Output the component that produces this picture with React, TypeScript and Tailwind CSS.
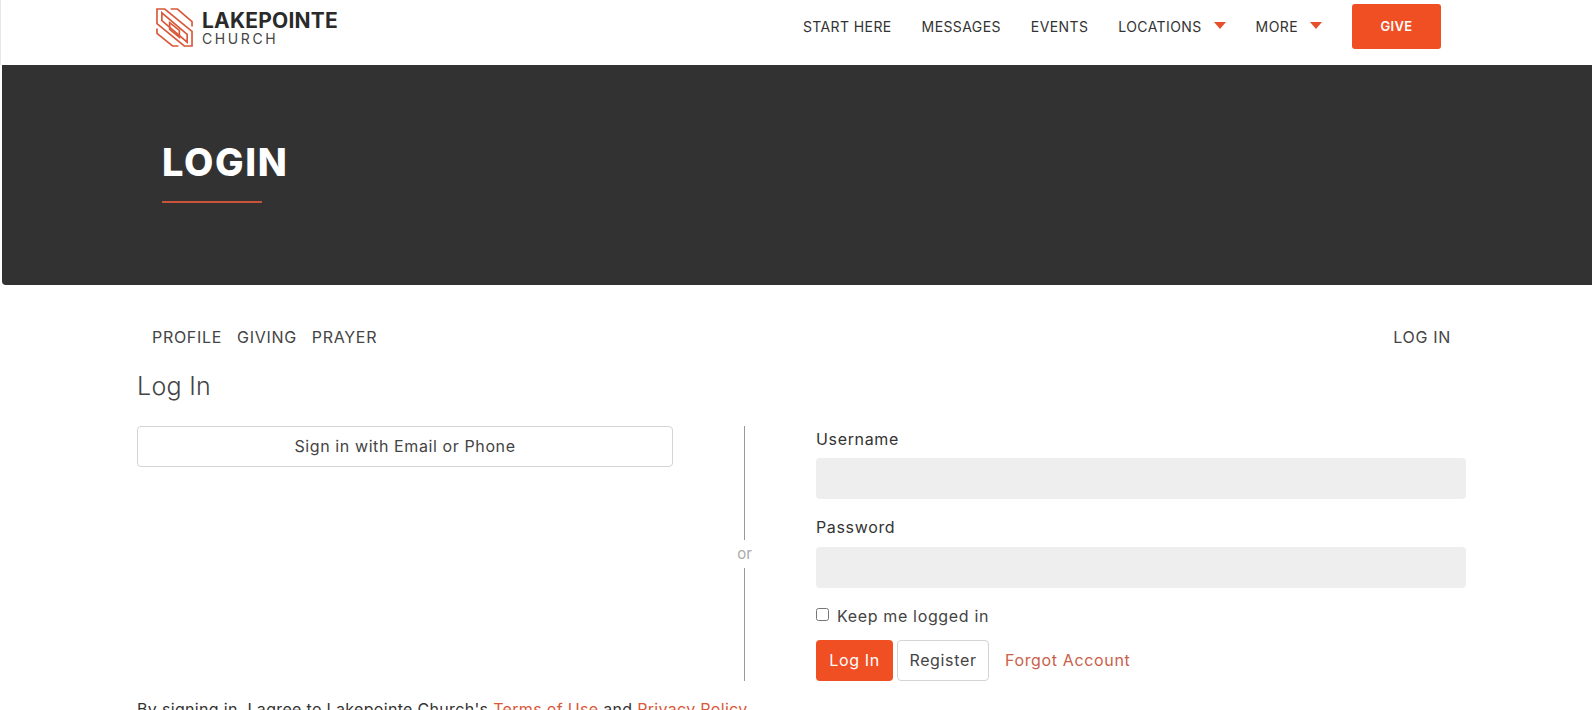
import React from 'react';

const font = "font-['Inter','Noto_Sans',sans-serif]";

const Logo = () => (
  <svg width="37" height="39" viewBox="0 0 38 40" fill="none" stroke="#d9583a" strokeWidth="1.7">
    <path d="M1 1H9L37 24V39H29L1 16Z" />
    <path d="M15 1H22L37 14V19" />
    <path d="M1 21V26L17 39H23" />
    <path d="M6 5V13L32 35V27Z" />
    <path d="M14 15L24 23V30L14 22Z" />
  </svg>
);

const Caret = () => <span className="mb-[3px] ml-[12px] inline-block border-x-[6px] border-t-[7px] border-x-transparent border-t-[#e8502c]" />;

const navItems = [
  { label: 'START HERE' },
  { label: 'MESSAGES' },
  { label: 'EVENTS' },
  { label: 'LOCATIONS', caret: true },
  { label: 'MORE', caret: true },
];

export default function App() {
  return (
    <div className={`${font} h-[710px] overflow-hidden bg-white text-[#333]`}>
      {/* Header */}
      <header className="flex h-[65px] items-center justify-between border-l border-gray-200 pl-[155px] pr-[151px]">
        <div className="mb-[10px] flex items-center gap-[9px]">
          <Logo />
          <div className="leading-none">
            <div className="text-[21px] font-bold tracking-[0.2px] text-[#2a2a2a]">LAKEPOINTE</div>
            <div className="mt-[1px] text-[14px] tracking-[2.6px] text-[#444]">CHURCH</div>
          </div>
        </div>
        <nav className="mb-[12px] flex items-center gap-[30px] text-[14px] text-[#333]">
          {navItems.map((item) => (
            <a key={item.label} className="flex items-center tracking-[0.4px]">
              {item.label}
              {item.caret && <Caret />}
            </a>
          ))}
          <button className="h-[45px] w-[89px] rounded-[3px] bg-[#f04e23] text-[13px] font-semibold tracking-[0.3px] text-white">GIVE</button>
        </nav>
      </header>

      {/* Page title */}
      <section className="ml-[2px] h-[220px] rounded-bl-[4px] bg-[#323232] pl-[160px] pt-[75px]">
        <h1 className="text-[38px] font-extrabold leading-[44px] tracking-[1.6px] text-white">LOGIN</h1>
        <div className="mt-[17px] h-[2px] w-[100px] bg-[#c9543a]" />
      </section>

      <main className="pl-[137px] pr-[126px]">
        {/* Sub nav */}
        <div className="flex items-center justify-between pl-[15px] pr-[15px] pt-[42px] text-[16px] leading-[20px] tracking-[0.7px] text-[#444]">
          <div className="flex gap-[15px]">
            <a>PROFILE</a>
            <a>GIVING</a>
            <a>PRAYER</a>
          </div>
          <a>LOG IN</a>
        </div>

        <h2 className="mt-[23px] text-[25px] font-light leading-[32px] tracking-[0.3px] text-[#444]">Log In</h2>

        <div className="mt-[24px] flex">
          {/* External sign in */}
          <div className="w-[536px]">
            <button className="h-[41px] w-full rounded-[4px] border border-[#d4d4d4] bg-white pb-[1px] text-[16px] tracking-[0.6px] text-[#444]">
              Sign in with Email or Phone
            </button>
          </div>

          {/* Divider */}
          <div className="mx-[71px] flex h-[255px] w-[1px] flex-col items-center">
            <div className="w-[1px] flex-1 bg-[#999]" />
            <span className="py-[5px] text-[15px] leading-[18px] text-[#aaa]">or</span>
            <div className="w-[1px] flex-1 bg-[#999]" />
          </div>

          {/* Login form */}
          <form className="w-[650px] tracking-[0.65px]">
            <label className="mt-[3px] block text-[16px] leading-[20px] text-[#333]">Username</label>
            <input className="mt-[9px] block h-[41px] w-full rounded-[4px] bg-[#eeeeee]" />
            <label className="mt-[18px] block text-[16px] leading-[20px] text-[#333]">Password</label>
            <input className="mt-[10px] block h-[41px] w-full rounded-[4px] bg-[#eeeeee]" />
            <label className="mt-[18px] flex items-center text-[16px] leading-[20px] text-[#444]">
              <input type="checkbox" className="mb-[3px] mr-[8px] h-[13px] w-[13px]" />
              Keep me logged in
            </label>
            <div className="mt-[14px] flex items-center">
              <button type="button" className="h-[41px] w-[77px] rounded-[4px] bg-[#f04e23] pb-[1px] text-[16px] text-white">Log In</button>
              <button type="button" className="ml-[4px] h-[41px] w-[92px] rounded-[4px] border border-[#d4d4d4] bg-white pb-[1px] text-[16px] text-[#444]">Register</button>
              <a className="mb-[1px] ml-[16px] text-[16px] text-[#c9604a]">Forgot Account</a>
            </div>
          </form>
        </div>

        <p className="mt-[18px] text-[16px] leading-[20px] tracking-[0.32px] text-[#333]">
          By signing in, I agree to Lakepointe Church's <a className="text-[#d9583a]">Terms of Use</a> and <a className="text-[#d9583a]">Privacy Policy</a>
        </p>
      </main>
    </div>
  );
}
